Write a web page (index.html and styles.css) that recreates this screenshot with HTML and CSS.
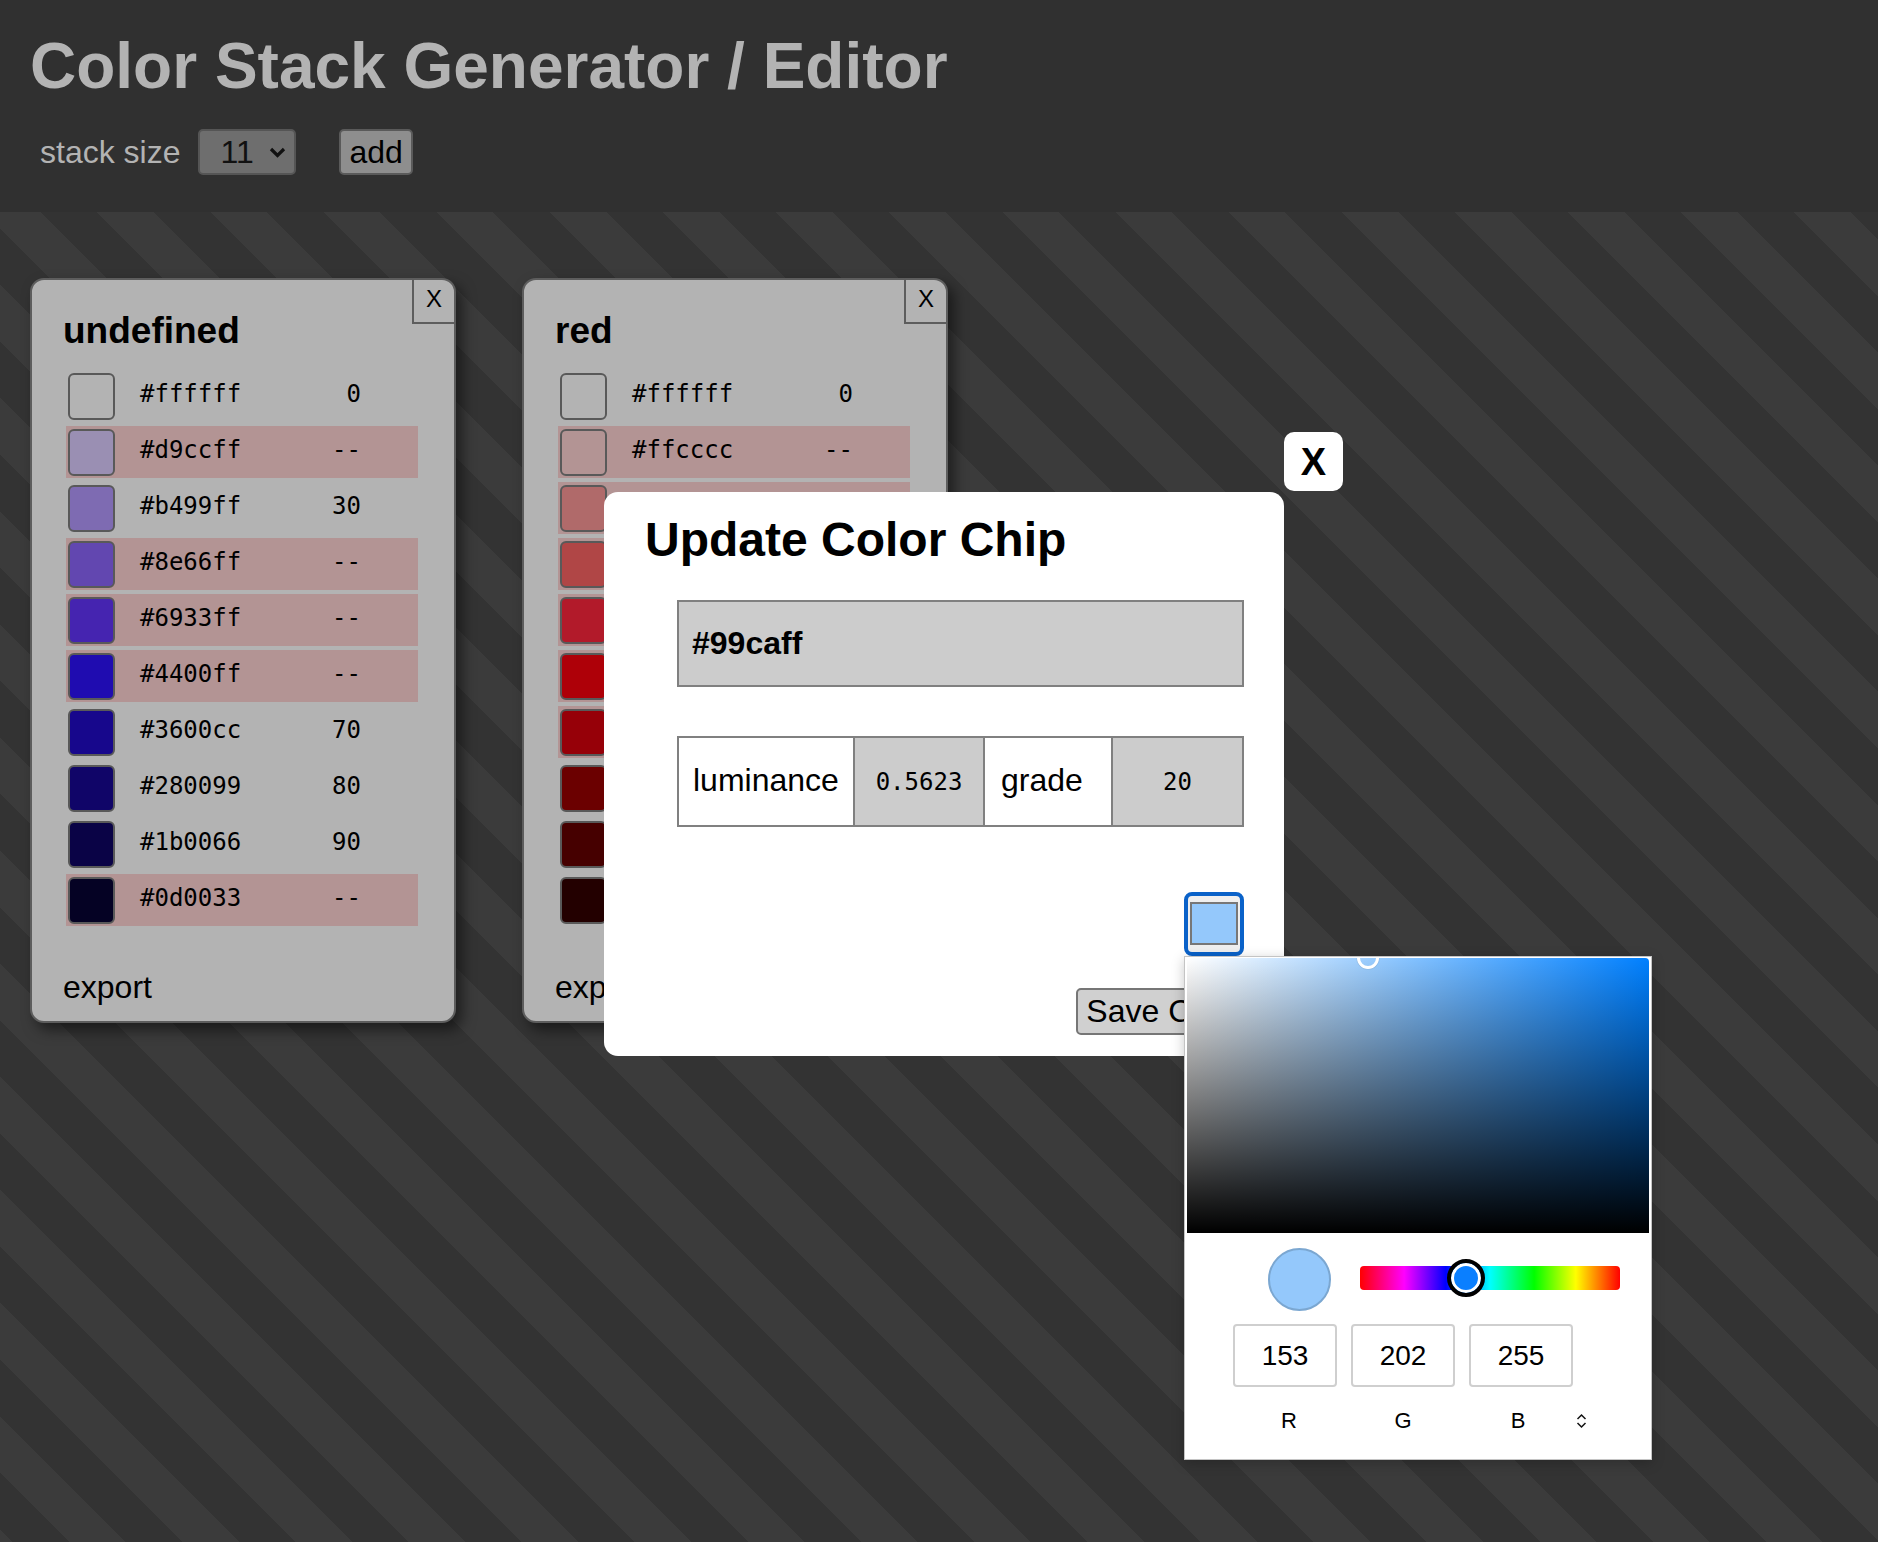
FILE: index.html
```html
<!DOCTYPE html>
<html lang="en">
<head>
<meta charset="utf-8">
<title>Color Stack Generator / Editor</title>
<link rel="stylesheet" href="styles.css">
</head>
<body>
<header class="top">
  <h1 class="title">Color Stack Generator / Editor</h1>
  <div class="controls">
    <span class="size-label">stack size</span>
    <div class="select"><span>11</span><svg class="chev" width="17" height="12" viewBox="0 0 17 12"><path d="M2 2 L8.5 8.5 L15 2" fill="none" stroke="#111" stroke-width="3.2"/></svg></div>
    <button class="add-btn">add</button>
  </div>
</header>
<main class="stage">
  <section class="stack">
    <button class="stack-close">X</button>
    <h2 class="stack-title">undefined</h2>
    <ul class="chips">
      <li class="chip-row"><span class="chip" style="background:#b3b3b3"></span><span class="hex">#ffffff</span><span class="grade">0</span></li>
      <li class="chip-row flag"><span class="chip" style="background:#9a8fb3"></span><span class="hex">#d9ccff</span><span class="grade">--</span></li>
      <li class="chip-row"><span class="chip" style="background:#7e6bb2"></span><span class="hex">#b499ff</span><span class="grade">30</span></li>
      <li class="chip-row flag"><span class="chip" style="background:#6247b0"></span><span class="hex">#8e66ff</span><span class="grade">--</span></li>
      <li class="chip-row flag"><span class="chip" style="background:#4524b0"></span><span class="hex">#6933ff</span><span class="grade">--</span></li>
      <li class="chip-row flag"><span class="chip" style="background:#1f0cb0"></span><span class="hex">#4400ff</span><span class="grade">--</span></li>
      <li class="chip-row"><span class="chip" style="background:#17078c"></span><span class="hex">#3600cc</span><span class="grade">70</span></li>
      <li class="chip-row"><span class="chip" style="background:#100568"></span><span class="hex">#280099</span><span class="grade">80</span></li>
      <li class="chip-row"><span class="chip" style="background:#0a0346"></span><span class="hex">#1b0066</span><span class="grade">90</span></li>
      <li class="chip-row flag"><span class="chip" style="background:#050224"></span><span class="hex">#0d0033</span><span class="grade">--</span></li>
    </ul>
    <div class="export">export</div>
  </section>
  <section class="stack">
    <button class="stack-close">X</button>
    <h2 class="stack-title">red</h2>
    <ul class="chips">
      <li class="chip-row"><span class="chip" style="background:#b3b3b3"></span><span class="hex">#ffffff</span><span class="grade">0</span></li>
      <li class="chip-row flag"><span class="chip" style="background:#b39494"></span><span class="hex">#ffcccc</span><span class="grade">--</span></li>
      <li class="chip-row flag"><span class="chip" style="background:#b06a6a"></span></li>
      <li class="chip-row flag"><span class="chip" style="background:#b04646"></span></li>
      <li class="chip-row flag"><span class="chip" style="background:#b21a2a"></span></li>
      <li class="chip-row flag"><span class="chip" style="background:#ae0008"></span></li>
      <li class="chip-row flag"><span class="chip" style="background:#960008"></span></li>
      <li class="chip-row"><span class="chip" style="background:#6b0000"></span></li>
      <li class="chip-row"><span class="chip" style="background:#460000"></span></li>
      <li class="chip-row"><span class="chip" style="background:#230000"></span></li>
    </ul>
    <div class="export">export</div>
  </section>
</main>

<div class="modal">
  <button class="modal-close">X</button>
  <h2 class="modal-title">Update Color Chip</h2>
  <div class="modal-form">
    <input class="hex-input" type="text" value="#99caff">
    <div class="metrics">
      <div class="m-cell m-label">luminance</div>
      <div class="m-cell m-num">0.5623</div>
      <div class="m-cell m-label">grade</div>
      <div class="m-cell m-num">20</div>
    </div>
    <div class="swatch-row"><div class="swatch"><div class="swatch-fill"></div></div></div>
    <div class="save-row"><button class="save">Save Chip</button></div>
  </div>
</div>

<div class="picker">
  <div class="sv"><span class="sv-cursor"></span></div>
  <div class="picker-row">
    <span class="preview"></span>
    <div class="hue"><span class="hue-knob"></span></div>
  </div>
  <div class="rgb-row">
    <div class="rgb-input">153</div>
    <div class="rgb-input">202</div>
    <div class="rgb-input">255</div>
  </div>
  <div class="rgb-labels">
    <span class="rgb-label r">R</span>
    <span class="rgb-label">G</span>
    <span class="rgb-label b">B</span>
    <svg class="updown" width="11" height="16" viewBox="0 0 11 16"><path d="M1.5 6 L5.5 2 L9.5 6 M1.5 10 L5.5 14 L9.5 10" fill="none" stroke="#111" stroke-width="1.5"/></svg>
  </div>
</div>
</body>
</html>
```

FILE: styles.css
```css
html, body {
  margin: 0;
  padding: 0;
}

body {
  font-family: "Liberation Sans", Arial, Helvetica, sans-serif;
  background: #303030;
  overflow: hidden;
  position: relative;
  color: #000;
}

.top {
  height: 212px;
  box-sizing: border-box;
  padding: 29px 0 0 30px;
  background: #303030;
}

.title {
  margin: 0;
  font-size: 64px;
  line-height: 74px;
  font-weight: bold;
  color: #b3b3b3;
}

.controls {
  display: flex;
  align-items: center;
  margin-top: 26px;
  padding-left: 10px;
  height: 46px;
}

.size-label {
  font-size: 32px;
  color: #b3b3b3;
  margin-right: 18px;
}

.select {
  width: 98px;
  height: 46px;
  box-sizing: border-box;
  border: 2px solid #555;
  border-radius: 5px;
  background: #6e6e6e;
  display: flex;
  align-items: center;
  padding-left: 20px;
  font-size: 32px;
  color: #111;
}

.chev {
  margin-left: 15px;
  margin-top: 2px;
}

.add-btn {
  margin-left: 43px;
  height: 46px;
  box-sizing: border-box;
  border: 2px solid #5a5a5a;
  border-radius: 5px;
  background: #8e8e8e;
  font-family: inherit;
  font-size: 32px;
  padding: 0 8px;
  color: #000;
}

.stage {
  height: calc(100vh - 212px);
  box-sizing: border-box;
  padding: 66px 0 0 30px;
  display: flex;
  align-items: flex-start;
  gap: 66px;
  background: repeating-linear-gradient(45deg, #3b3b3b 0 9px, #333333 9px 49px, #3b3b3b 49px 80px);
}

.stack {
  position: relative;
  width: 426px;
  box-sizing: border-box;
  border: 2px solid #5d5d5d;
  border-radius: 14px;
  background: #b3b3b3;
  padding: 30px 0 15px 31px;
  box-shadow: 6px 7px 14px rgba(0, 0, 0, 0.5);
}

.stack-close {
  position: absolute;
  top: -2px;
  right: -2px;
  width: 44px;
  height: 46px;
  box-sizing: border-box;
  border: 2px solid #5d5d5d;
  border-top-color: transparent;
  border-right-color: transparent;
  border-radius: 0 14px 0 0;
  background: transparent;
  font-family: inherit;
  font-size: 24px;
  line-height: 1;
  padding: 0 0 4px;
  color: #000;
}

.stack-title {
  margin: 0;
  font-size: 37px;
  line-height: 42px;
  font-weight: bold;
}

.chips {
  list-style: none;
  margin: 18px 0 0 3px;
  padding: 0;
}

.chip-row {
  display: flex;
  align-items: center;
  width: 352px;
  height: 52px;
  box-sizing: border-box;
  padding-left: 2px;
  margin-bottom: 4px;
}

.chip-row.flag {
  background: #b39494;
}

.chip {
  flex: none;
  width: 47px;
  height: 47px;
  box-sizing: border-box;
  border: 2px solid #595959;
  border-radius: 6px;
  margin-right: 25px;
}

.hex,
.grade {
  font-family: "DejaVu Sans Mono", "Liberation Mono", monospace;
  font-size: 24px;
  line-height: 28px;
  margin-top: -4px;
}

.hex {
  width: 101px;
}

.grade {
  width: 120px;
  text-align: right;
}

.export {
  margin-top: 43px;
  font-size: 32px;
  line-height: 37px;
}

/* modal */
.modal {
  position: absolute;
  left: 604px;
  top: 492px;
  width: 680px;
  box-sizing: border-box;
  padding: 20px 40px 21px 41px;
  background: #fff;
  border-radius: 14px;
  z-index: 5;
}

.modal-close {
  position: absolute;
  left: 680px;
  top: -60px;
  width: 59px;
  height: 59px;
  border: none;
  border-radius: 10px;
  background: #fff;
  font-family: inherit;
  font-weight: bold;
  font-size: 38px;
  line-height: 1;
  padding: 0;
  color: #000;
  display: flex;
  align-items: center;
  justify-content: center;
}

.modal-title {
  margin: 0;
  font-size: 48px;
  line-height: 55px;
  font-weight: bold;
}

.modal-form {
  margin: 33px 0 0 32px;
}

.hex-input {
  display: block;
  width: 567px;
  height: 87px;
  box-sizing: border-box;
  border: 2px solid #808080;
  background: #cccccc;
  font-family: "Liberation Sans", Arial, sans-serif;
  font-weight: bold;
  font-size: 32px;
  padding: 0 13px;
  margin: 0;
  color: #000;
  outline: none;
}

.metrics {
  display: grid;
  grid-template-columns: 176px 130px 128px 131px;
  width: 567px;
  height: 91px;
  box-sizing: border-box;
  margin-top: 49px;
  border: 2px solid #808080;
  border-right: none;
}

.m-cell {
  display: flex;
  align-items: center;
  border-right: 2px solid #808080;
  box-sizing: border-box;
}

.m-label {
  font-size: 32px;
  padding-left: 14px;
  padding-bottom: 2px;
}

.m-label + .m-num + .m-label {
  padding-left: 16px;
}

.m-num {
  justify-content: center;
  background: #cccccc;
  font-family: "DejaVu Sans Mono", "Liberation Mono", monospace;
  font-size: 24px;
}

.swatch-row {
  display: flex;
  justify-content: flex-end;
  margin-top: 65px;
}

.swatch {
  width: 60px;
  height: 64px;
  box-sizing: border-box;
  border: 4px solid #0a62c9;
  border-radius: 8px;
  background: #efefef;
  padding: 6px 2px 7px;
}

.swatch-fill {
  height: 100%;
  box-sizing: border-box;
  border: 2px solid #777;
  background: #94c8fb;
}

.save-row {
  display: flex;
  justify-content: flex-end;
  margin-top: 32px;
}

.save {
  height: 47px;
  box-sizing: border-box;
  font-family: inherit;
  font-size: 32px;
  padding: 0 8px;
  border: 2px solid #767676;
  border-radius: 5px;
  background: #d0d0d0;
  color: #000;
}

/* color picker popup */
.picker {
  position: absolute;
  left: 1184px;
  top: 956px;
  width: 468px;
  height: 504px;
  box-sizing: border-box;
  border: 1px solid #c4c4c4;
  background: #fff;
  padding: 1px 2px 0 2px;
  box-shadow: 0 3px 12px rgba(0, 0, 0, 0.22);
  z-index: 10;
}

.sv {
  position: relative;
  height: 275px;
  border-radius: 4px 4px 0 0;
  overflow: hidden;
  background:
    linear-gradient(to top, #000, rgba(0, 0, 0, 0)),
    linear-gradient(to right, #fff, #0080ff);
}

.sv-cursor {
  position: absolute;
  left: 170px;
  top: -11px;
  width: 22px;
  height: 22px;
  box-sizing: border-box;
  border: 3px solid #fff;
  border-radius: 50%;
  box-shadow: 0 0 1px rgba(0, 0, 0, 0.4);
}

.picker-row {
  display: flex;
  align-items: center;
  margin-top: 15px;
  padding-left: 81px;
  height: 63px;
}

.preview {
  flex: none;
  width: 63px;
  height: 63px;
  box-sizing: border-box;
  border-radius: 50%;
  border: 2px solid #7ba7d1;
  background: #94c8fb;
}

.hue {
  position: relative;
  width: 260px;
  height: 24px;
  margin-left: 29px;
  margin-top: -3px;
  border-radius: 4px;
  background: linear-gradient(to right, #ff0000 0%, #ff00ff 17%, #0000ff 33%, #00ffff 50%, #00ff00 67%, #ffff00 83%, #ff0000 100%);
}

.hue-knob {
  position: absolute;
  left: 87px;
  top: -7px;
  width: 38px;
  height: 38px;
  box-sizing: border-box;
  border: 4px solid #000;
  border-radius: 50%;
  background: #0a7fff;
  box-shadow: inset 0 0 0 3px #fff;
}

.rgb-row {
  display: flex;
  gap: 14px;
  margin-top: 13px;
  padding-left: 46px;
}

.rgb-input {
  width: 104px;
  height: 63px;
  box-sizing: border-box;
  border: 2px solid #cfcfcf;
  border-radius: 4px;
  font-size: 28px;
  display: flex;
  align-items: center;
  justify-content: center;
}

.rgb-labels {
  display: flex;
  align-items: center;
  gap: 14px;
  margin-top: 21px;
  padding-left: 46px;
  font-size: 22px;
  line-height: 25px;
}

.rgb-label {
  width: 104px;
  text-align: center;
}

.rgb-label.r {
  padding-left: 8px;
  box-sizing: border-box;
}

.rgb-label.b {
  padding-right: 6px;
  box-sizing: border-box;
}

.updown {
  margin-left: -11px;
}
```
